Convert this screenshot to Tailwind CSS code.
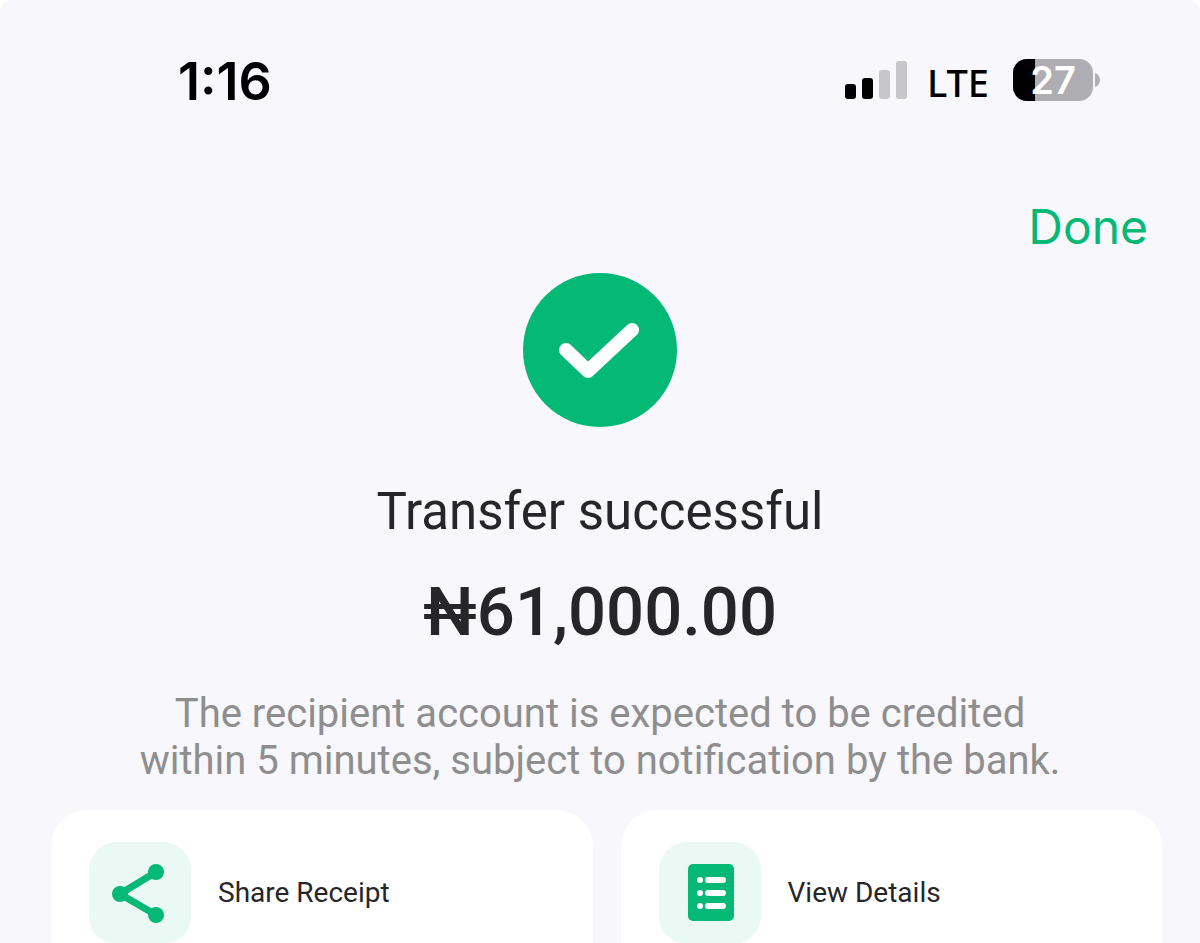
<!DOCTYPE html>
<html lang="en">
<head>
    <meta charset="UTF-8">
    <meta name="viewport" content="width=device-width, initial-scale=1.0">
    <title>Transfer successful</title>
    <script src="https://cdn.jsdelivr.net/npm/@tailwindcss/browser@4"></script>
</head>
<body class="bg-white font-['Roboto',sans-serif] text-[#262628]">
    <div class="min-h-screen flex flex-col bg-[#f7f7fc] rounded-t-xl">
        <!-- Status bar -->
        <header class="flex items-center justify-between h-16 mt-[50px] pl-[178px] pr-[100px] font-['Inter',sans-serif] text-black">
            <time class="text-[52px] leading-16 font-semibold">1:16</time>
            <div class="flex items-center pb-1">
                <svg class="w-[62px] h-10" viewBox="0 0 62 40" aria-label="Signal">
                    <rect x="0" y="24" width="11" height="15" rx="3" fill="#000"/>
                    <rect x="17" y="18" width="11" height="21" rx="3" fill="#000"/>
                    <rect x="34" y="10" width="11" height="29" rx="3" fill="#c6c6c8"/>
                    <rect x="51" y="1" width="11" height="38" rx="3" fill="#c6c6c8"/>
                </svg>
                <span class="ml-5 pt-1 text-[38px] leading-14 font-medium font-['Noto_Sans',sans-serif]">LTE</span>
                <div class="ml-6 relative flex items-center justify-center w-20 h-[42px] rounded-[14px] bg-[#aeaeb2]">
                    <div class="absolute inset-y-0 left-0 rounded-l-[14px] bg-black" style="width: 27%"></div>
                    <span class="relative text-[38px] leading-12 font-semibold text-white">27</span>
                </div>
                <svg class="ml-[2px] w-[5px] h-[14px]" viewBox="0 0 5 14"><path d="M0 0C3 1 5 4 5 7s-2 6-5 7z" fill="#aeaeb2"/></svg>
            </div>
        </header>

        <nav class="flex justify-end mt-[85px] pr-[52px]">
            <button class="font-['Inter',sans-serif] text-[48px] leading-14 text-[#04b876]">Done</button>
        </nav>

        <main class="flex-1 flex flex-col items-center mt-[18px]">
            <svg class="w-[154px] h-[154px]" viewBox="0 0 154 154" aria-hidden="true">
                <circle cx="77" cy="77" r="77" fill="#04b876"/>
                <path d="M43 77L65 98L109 57" fill="none" stroke="#fff" stroke-width="14" stroke-linecap="round" stroke-linejoin="round"/>
            </svg>
            <h1 class="mt-[53px] text-[51px] leading-16">Transfer successful</h1>
            <p class="mt-7 text-[67px] leading-20 font-medium">₦61,000.00</p>
            <p class="mt-[38px] text-[40px] leading-[47px] text-center text-[#8e8e8f]">The recipient account is expected to be credited<br>within 5 minutes, subject to notification by the bank.</p>

            <div class="flex-1 self-stretch grid grid-cols-2 gap-7 mt-[26px] pl-[51px] pr-[38px]">
                <button class="flex items-start gap-[27px] pt-8 pl-[38px] bg-white rounded-t-[36px] text-left">
                    <span class="flex items-center justify-center size-[102px] bg-[#eaf9f4] rounded-[28px]">
                        <svg class="size-16" viewBox="0 0 64 64" aria-hidden="true">
                            <g fill="#04b876" stroke="#04b876">
                                <path d="M48 11L12 33L48 54" fill="none" stroke-width="7"/>
                                <circle cx="48" cy="11" r="8" stroke="none"/>
                                <circle cx="12" cy="33" r="8" stroke="none"/>
                                <circle cx="48" cy="54" r="8" stroke="none"/>
                            </g>
                        </svg>
                    </span>
                    <span class="text-[28px] leading-[101px]">Share Receipt</span>
                </button>
                <button class="flex items-start gap-[27px] pt-8 pl-[38px] bg-white rounded-t-[36px] text-left">
                    <span class="flex items-center justify-center size-[102px] bg-[#eaf9f4] rounded-[28px]">
                        <svg class="size-16" viewBox="0 0 64 64" aria-hidden="true">
                            <rect x="10" y="3" width="46" height="57" rx="5" fill="#04b876"/>
                            <g fill="#fff">
                                <circle cx="22" cy="19" r="3"/><rect x="27" y="16" width="21" height="6" rx="3"/>
                                <circle cx="22" cy="32" r="3"/><rect x="27" y="29" width="21" height="6" rx="3"/>
                                <circle cx="22" cy="45" r="3"/><rect x="27" y="42" width="21" height="6" rx="3"/>
                            </g>
                        </svg>
                    </span>
                    <span class="text-[28px] leading-[101px]">View Details</span>
                </button>
            </div>
        </main>
    </div>
</body>
</html>
